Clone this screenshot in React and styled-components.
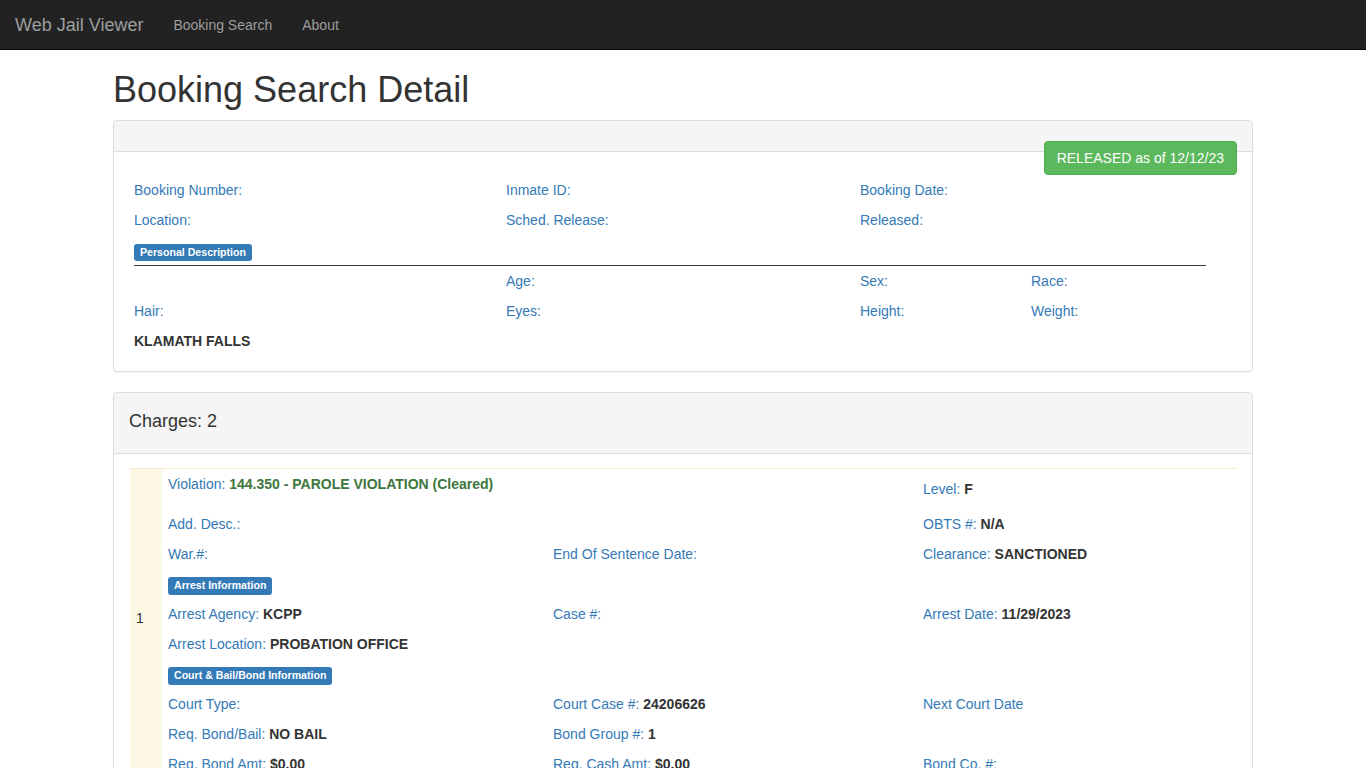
import styled, { createGlobalStyle } from "styled-components";

const GlobalStyle = createGlobalStyle`
  * { box-sizing: border-box; }
  body {
    margin: 0;
    font-family: "Liberation Sans", Arial, Helvetica, sans-serif;
    font-size: 14px;
    line-height: 1.42857;
    color: #333;
    background: #fff;
  }
`;

const Navbar = styled.nav`
  height: 50px;
  background: #222;
  border-bottom: 1px solid #080808;
  display: flex;
  align-items: center;
`;

const Brand = styled.a`
  padding: 15px;
  font-size: 18px;
  line-height: 20px;
  color: #9d9d9d;
  text-decoration: none;
`;

const NavLink = styled.a`
  padding: 15px;
  font-size: 14px;
  line-height: 20px;
  color: #9d9d9d;
  text-decoration: none;
`;

const Container = styled.div`
  width: 1170px;
  margin: 0 auto;
  padding: 0 15px;
`;

const Title = styled.h1`
  font-size: 36px;
  font-weight: 500;
  line-height: 1.1;
  margin: 20px 0 10px;
  color: #333;
`;

const Panel = styled.div`
  position: relative;
  border: 1px solid #ddd;
  border-radius: 4px;
  box-shadow: 0 1px 1px rgba(0, 0, 0, 0.05);
  margin-bottom: 20px;
  background: #fff;
`;

const PanelHeading = styled.div`
  background: #f5f5f5;
  border-bottom: 1px solid #ddd;
  border-radius: 3px 3px 0 0;
  padding: 10px 15px;
  min-height: 31px;
`;

const PanelTitle = styled.h3`
  margin: 8px 0 12px;
  font-size: 18px;
  font-weight: 500;
  line-height: 20px;
  color: #333;
`;

const PanelBody = styled.div`
  padding: ${(p) => p.$pad || "15px"};
`;

const StatusBadge = styled.div`
  position: absolute;
  top: 20px;
  right: 15px;
  padding: 6px 12px;
  font-size: 14px;
  line-height: 20px;
  color: #fff;
  background: #5cb85c;
  border: 1px solid #4cae4c;
  border-radius: 4px;
`;

const InfoGrid = styled.div`
  margin: 0 31px 0 5px;
  display: grid;
  grid-template-columns: 372px 354px 171px 1fr;
`;

const Cell = styled.div`
  height: ${(p) => p.$h || "30px"};
  padding-top: ${(p) => p.$top || "5px"};
  line-height: 20px;
  white-space: nowrap;
  grid-column: ${(p) => p.$span || "auto"};
`;

const Label = styled.span`
  color: #337ab7;
`;

const Value = styled.b`
  color: ${(p) => p.$color || "#333"};
  font-weight: 700;
`;

const SectionRow = styled.div`
  grid-column: 1 / -1;
  height: ${(p) => (p.$ruled ? "31px" : "30px")};
  padding-top: ${(p) => (p.$ruled ? "6px" : "5px")};
  display: flex;
  align-items: center;
  border-bottom: ${(p) => (p.$ruled ? "1px solid #333" : "none")};
`;

const Tag = styled.span`
  display: inline-block;
  padding: 2px 6px 3px;
  font-size: 10.6px;
  font-weight: 700;
  line-height: 1.2;
  color: #fff;
  background: #337ab7;
  border-radius: 3px;
  white-space: nowrap;
`;

const ChargeTable = styled.div`
  margin-left: 1px;
  border-top: 1px solid #faebcc;
`;

const ChargeRow = styled.div`
  display: grid;
  grid-template-columns: 32px 1fr;
`;

const ChargeNumber = styled.div`
  background: #fcf8e3;
  display: flex;
  align-items: center;
  padding: 0 0 10px 6px;
  color: #333;
`;

const ChargeGrid = styled.div`
  padding-left: 6px;
  display: grid;
  grid-template-columns: 385px 370px 1fr;
`;

function Field({ label, value, color, ...rest }) {
  return (
    <Cell {...rest}>
      {label && <Label>{label}</Label>}
      {value && (
        <>
          {" "}
          <Value $color={color}>{value}</Value>
        </>
      )}
    </Cell>
  );
}

function Charge({ num, violation, level, obts, clearance, agency, arrestDate, location, courtCase, bail, group, bondAmt, cashAmt }) {
  return (
    <ChargeRow>
      <ChargeNumber>{num}</ChargeNumber>
      <ChargeGrid>
        <Field $h="40px" $span="1 / 3" label="Violation:" value={violation} color="#3c763d" />
        <Field $h="40px" $top="10px" label="Level:" value={level} />

        <Field $span="1 / 3" label="Add. Desc.:" />
        <Field label="OBTS #:" value={obts} />

        <Field label="War.#:" />
        <Field label="End Of Sentence Date:" />
        <Field label="Clearance:" value={clearance} />

        <SectionRow><Tag>Arrest Information</Tag></SectionRow>

        <Field label="Arrest Agency:" value={agency} />
        <Field label="Case #:" />
        <Field label="Arrest Date:" value={arrestDate} />

        <Field $span="1 / -1" label="Arrest Location:" value={location} />

        <SectionRow><Tag>Court &amp; Bail/Bond Information</Tag></SectionRow>

        <Field label="Court Type:" />
        <Field label="Court Case #:" value={courtCase} />
        <Field label="Next Court Date" />

        <Field label="Req. Bond/Bail:" value={bail} />
        <Field label="Bond Group #:" value={group} />
        <Field />

        <Field label="Req. Bond Amt:" value={bondAmt} />
        <Field label="Req. Cash Amt:" value={cashAmt} />
        <Field label="Bond Co. #:" />
      </ChargeGrid>
    </ChargeRow>
  );
}

export default function App() {
  return (
    <>
      <GlobalStyle />
      <Navbar>
        <Brand href="#">Web Jail Viewer</Brand>
        <NavLink href="#">Booking Search</NavLink>
        <NavLink href="#">About</NavLink>
      </Navbar>

      <Container>
        <Title>Booking Search Detail</Title>

        <Panel>
          <PanelHeading />
          <StatusBadge>RELEASED as of 12/12/23</StatusBadge>
          <PanelBody $pad="23px 15px 15px">
            <InfoGrid>
              <Field label="Booking Number:" />
              <Field label="Inmate ID:" />
              <Field $span="3 / 5" label="Booking Date:" />

              <Field label="Location:" />
              <Field label="Sched. Release:" />
              <Field $span="3 / 5" label="Released:" />

              <SectionRow $ruled><Tag>Personal Description</Tag></SectionRow>

              <Field />
              <Field label="Age:" />
              <Field label="Sex:" />
              <Field label="Race:" />

              <Field label="Hair:" />
              <Field label="Eyes:" />
              <Field label="Height:" />
              <Field label="Weight:" />

              <Field $span="1 / -1" value="KLAMATH FALLS" />
            </InfoGrid>
          </PanelBody>
        </Panel>

        <Panel>
          <PanelHeading>
            <PanelTitle>Charges: 2</PanelTitle>
          </PanelHeading>
          <PanelBody $pad="14px 15px 15px">
            <ChargeTable>
              <Charge
                num="1"
                violation="144.350 - PAROLE VIOLATION (Cleared)"
                level="F"
                obts="N/A"
                clearance="SANCTIONED"
                agency="KCPP"
                arrestDate="11/29/2023"
                location="PROBATION OFFICE"
                courtCase="24206626"
                bail="NO BAIL"
                group="1"
                bondAmt="$0.00"
                cashAmt="$0.00"
              />
            </ChargeTable>
          </PanelBody>
        </Panel>
      </Container>
    </>
  );
}
